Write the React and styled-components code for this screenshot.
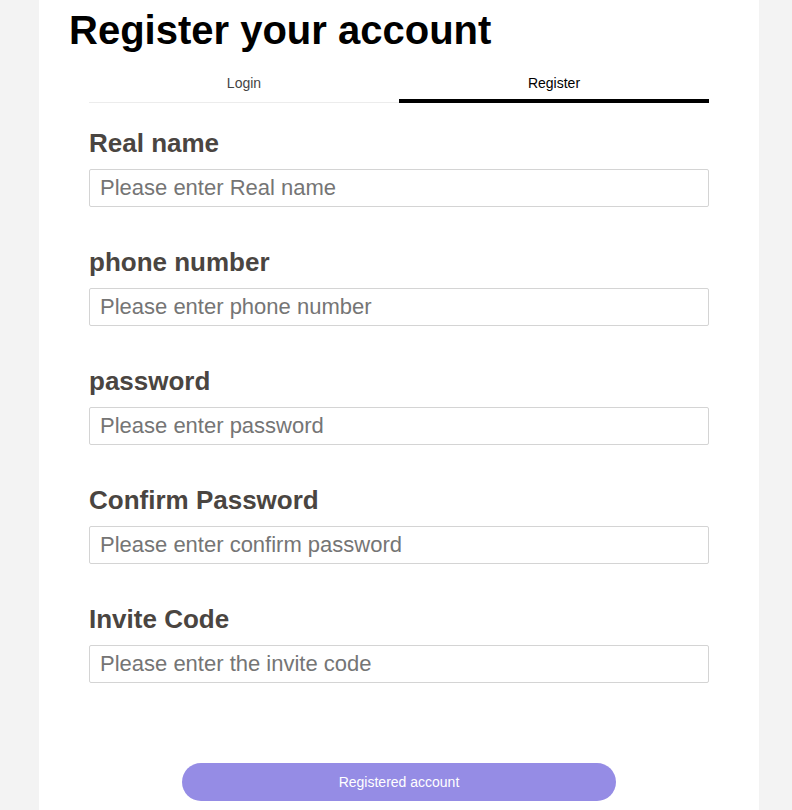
import React from "react";
import styled, { createGlobalStyle } from "styled-components";

const GlobalStyle = createGlobalStyle`
  html, body {
    margin: 0;
    padding: 0;
    background: #f3f3f3;
    font-family: "Liberation Sans", Arial, sans-serif;
  }
`;

const Page = styled.div`
  display: flex;
  padding-left: 39px;
  min-height: 810px;
`;

const Panel = styled.main`
  width: 720px;
  background: #ffffff;
  padding: 6px 30px 0;
  box-sizing: border-box;
  display: flex;
  flex-direction: column;
`;

const Title = styled.h1`
  margin: 0;
  font-size: 40px;
  line-height: 48px;
  font-weight: 700;
  color: #000;
`;

const Body = styled.div`
  padding: 0 20px;
  display: flex;
  flex-direction: column;
`;

const Tabs = styled.div`
  display: flex;
  margin-top: 9px;
  box-shadow: inset 0 -1px 0 #ececec;
`;

const Tab = styled.button`
  flex: 1;
  border: none;
  background: transparent;
  padding: 12px 0 8px;
  font-family: inherit;
  font-size: 14px;
  line-height: 16px;
  color: ${(p) => (p.$active ? "#000" : "#444")};
  border-bottom: 4px solid ${(p) => (p.$active ? "#000" : "transparent")};
  cursor: pointer;
`;

const Form = styled.form`
  display: flex;
  flex-direction: column;
  gap: 40px;
  margin-top: 25px;
`;

const Field = styled.div`
  display: flex;
  flex-direction: column;
  gap: 11px;
`;

const Label = styled.label`
  font-size: 26px;
  line-height: 30px;
  font-weight: 700;
  color: #4a4541;
`;

const Input = styled.input`
  box-sizing: border-box;
  width: 100%;
  height: 38px;
  border: 1px solid #d4d4d4;
  border-radius: 2px;
  padding: 0 10px;
  font-family: inherit;
  font-size: 22px;
  color: #333;
  outline: none;
  &::placeholder {
    color: #757575;
  }
`;

const Actions = styled.div`
  display: flex;
  justify-content: center;
  margin-top: 80px;
  padding-bottom: 9px;
`;

const Submit = styled.button`
  width: 434px;
  height: 38px;
  border: none;
  border-radius: 19px;
  background: #958ce5;
  color: #fff;
  font-family: inherit;
  font-size: 14px;
  cursor: pointer;
`;

const fields = [
  { label: "Real name", placeholder: "Please enter Real name", type: "text" },
  { label: "phone number", placeholder: "Please enter phone number", type: "tel" },
  { label: "password", placeholder: "Please enter password", type: "password" },
  { label: "Confirm Password", placeholder: "Please enter confirm password", type: "password" },
  { label: "Invite Code", placeholder: "Please enter the invite code", type: "text" },
];

export default function App() {
  return (
    <>
      <GlobalStyle />
      <Page>
        <Panel>
          <Title>Register your account</Title>
          <Body>
            <Tabs>
              <Tab type="button">Login</Tab>
              <Tab type="button" $active>
                Register
              </Tab>
            </Tabs>
            <Form onSubmit={(e) => e.preventDefault()}>
              {fields.map((f) => (
                <Field key={f.label}>
                  <Label>{f.label}</Label>
                  <Input type={f.type} placeholder={f.placeholder} />
                </Field>
              ))}
            </Form>
            <Actions>
              <Submit type="button">Registered account</Submit>
            </Actions>
          </Body>
        </Panel>
      </Page>
    </>
  );
}
